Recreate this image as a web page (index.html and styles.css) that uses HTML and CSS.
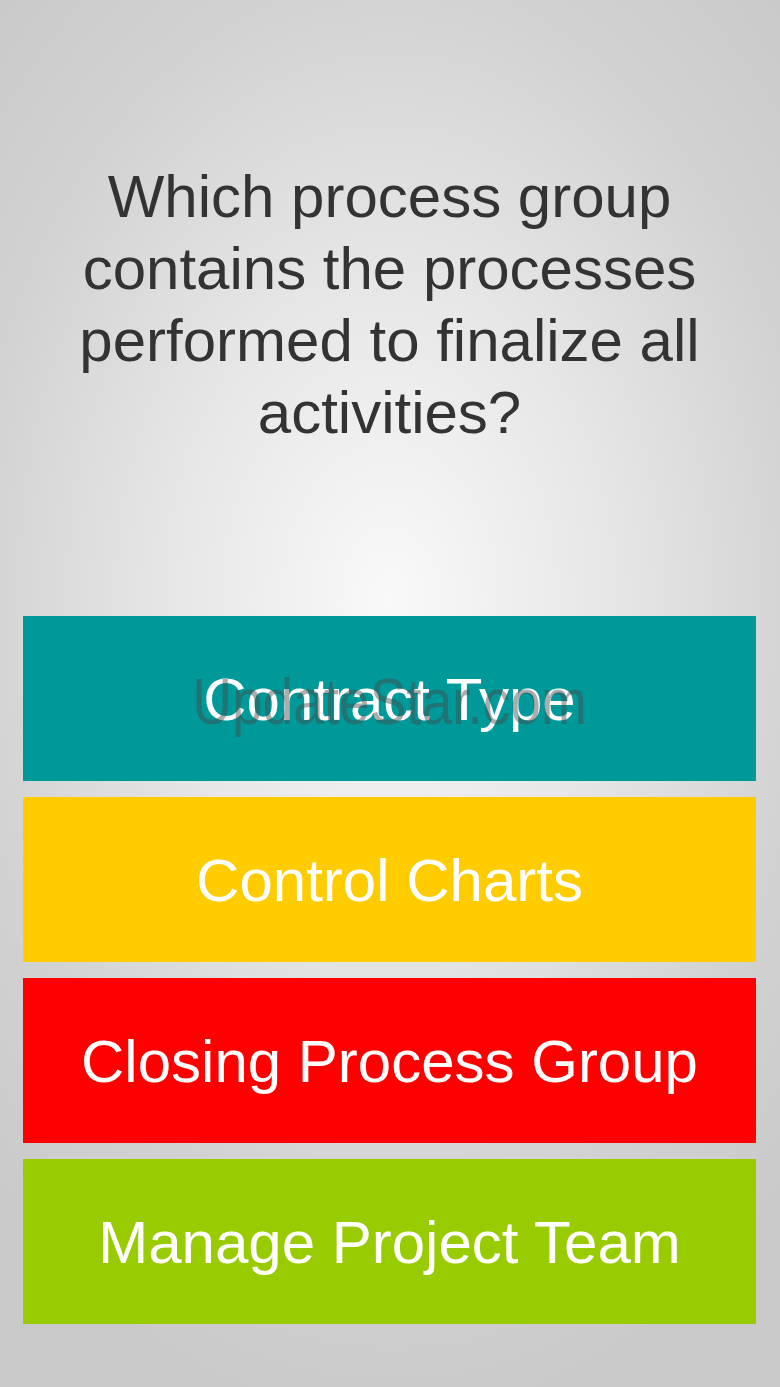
FILE: index.html
```html
<!DOCTYPE html>
<html lang="en">
<head>
<meta charset="utf-8">
<title>Quiz</title>
<link rel="stylesheet" href="styles.css">
</head>
<body>
<main class="screen">
  <h1 class="question">Which process group contains the processes performed to finalize all activities?</h1>
  <div class="answers">
    <button class="answer teal"><span class="label">Contract Type</span><span class="watermark">UpdateStar.com</span></button>
    <button class="answer yellow"><span class="label">Control Charts</span></button>
    <button class="answer red"><span class="label">Closing Process Group</span></button>
    <button class="answer green"><span class="label">Manage Project Team</span></button>
  </div>
</main>
</body>
</html>
```
FILE: styles.css
```css
html, body {
  margin: 0;
  padding: 0;
}
body {
  width: 780px;
  height: 1387px;
  overflow: hidden;
  font-family: "Liberation Sans", Arial, Helvetica, sans-serif;
}
.screen {
  box-sizing: border-box;
  width: 780px;
  height: 1387px;
  padding: 161px 24px 0 23px;
  background: radial-gradient(ellipse 560px 820px at 390px 600px, #f9f9f9 0%, #e6e6e6 40%, #d2d2d2 75%, #cacaca 100%);
  display: flex;
  flex-direction: column;
}
.question {
  margin: 0 20px;
  height: 455px;
  font-weight: normal;
  font-size: 60px;
  line-height: 72px;
  color: #333333;
  text-align: center;
}
.answers {
  display: flex;
  flex-direction: column;
  gap: 16px;
}
.answer {
  position: relative;
  display: flex;
  align-items: center;
  justify-content: center;
  height: 165px;
  width: 733px;
  border: 0;
  padding: 0;
  margin: 0;
  font-family: inherit;
  font-size: 60px;
  color: #ffffff;
}
.label {
  position: relative;
  z-index: 1;
  top: 1px;
}
.watermark {
  position: absolute;
  left: 0;
  right: 0;
  top: 50%;
  transform: translateY(-46%) scaleX(0.86);
  text-align: center;
  color: rgba(70, 70, 70, 0.45);
  font-size: 64px;
  z-index: 2;
  pointer-events: none;
}
.teal { background: #009999; }
.yellow { background: #ffcc00; }
.red { background: #ff0000; }
.green { background: #99cc00; }
```
